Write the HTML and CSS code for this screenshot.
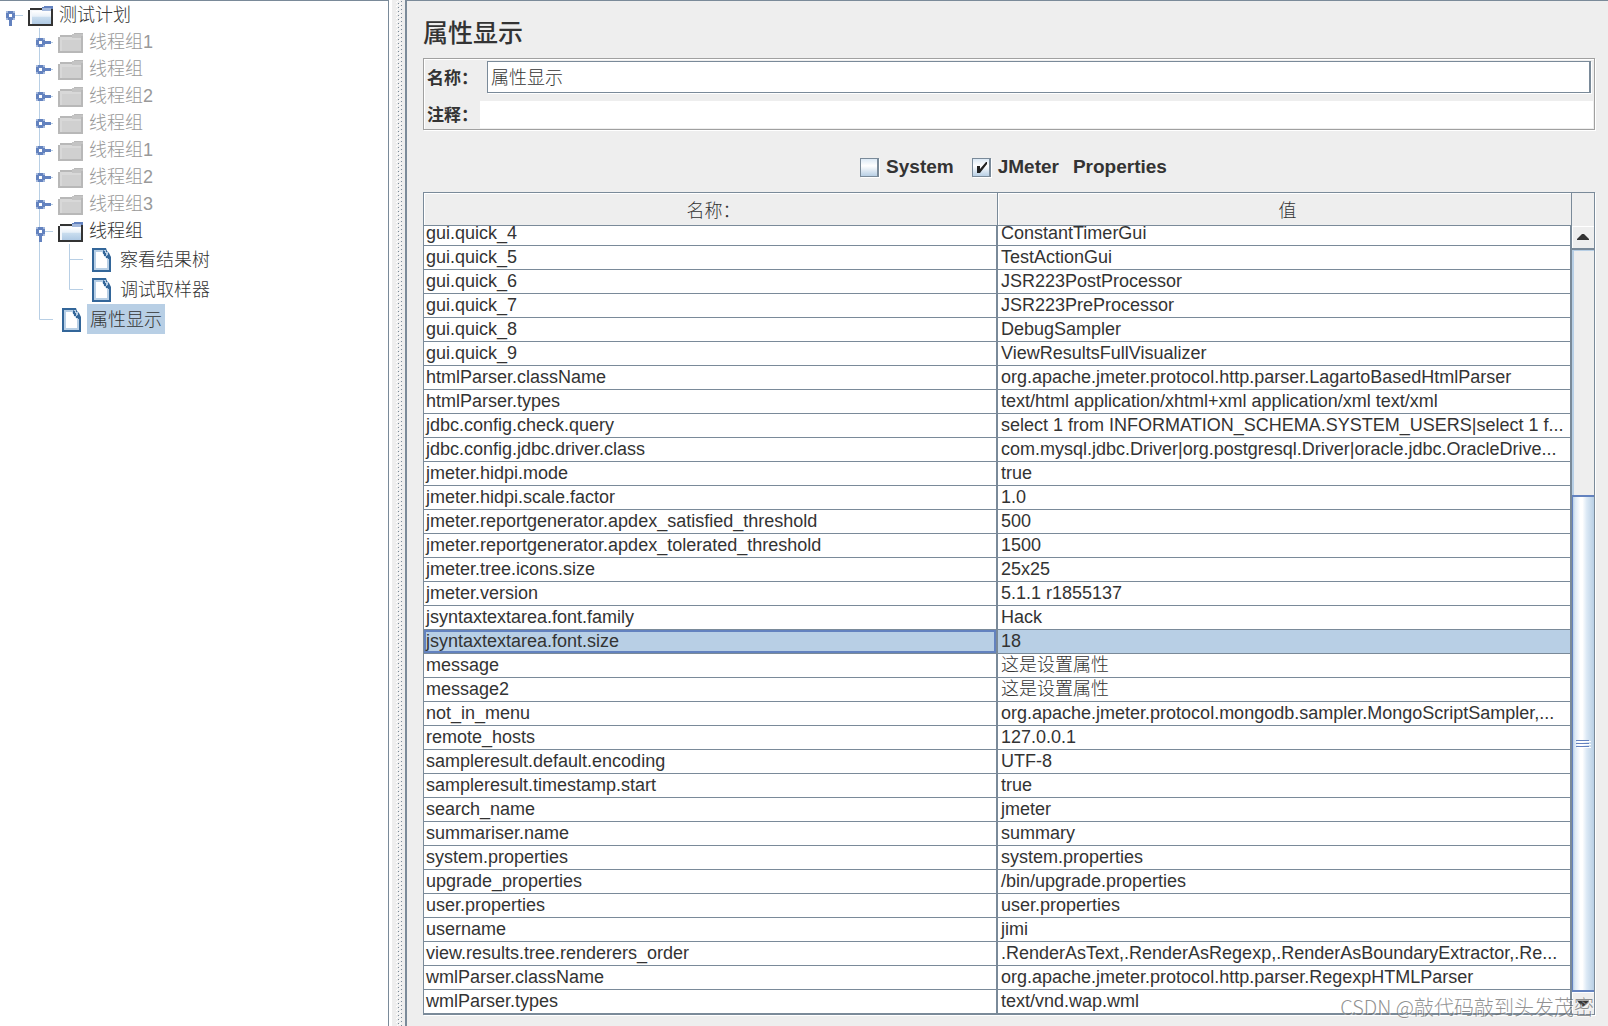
FILE: index.html
```html
<!DOCTYPE html>
<html lang="zh-CN">
<head>
<meta charset="utf-8">
<title>属性显示</title>
<link rel="stylesheet" href="styles.css">
</head>
<body>
<svg class="defs" aria-hidden="true">
  <defs>
    <linearGradient id="sky" x1="0" y1="0" x2="0" y2="1"><stop offset="0" stop-color="#fff"/><stop offset=".4" stop-color="#e8f0f8"/><stop offset=".5" stop-color="#c8dcee"/><stop offset="1" stop-color="#b0cae4"/></linearGradient>
    <symbol id="folder" viewBox="0 0 25 20">
      <path fill="#333" d="M2 2H14V5H23V2H25V20H0V4H2Z"/>
      <path fill="#f4f7fb" d="M2 4H14V5H23V18H2Z"/>
      <path fill="url(#sky)" d="M4 5H23V18H4Z"/>
      <path fill="#6382bf" d="M16 0H25V3H23V2H14V1H16Z"/>
      <path fill="#a3b8dc" d="M14 2H23V5H14Z"/>
    </symbol>
    <symbol id="folder-off" viewBox="0 0 25 20">
      <path fill="#b8b8b8" d="M2 2H14V1H16V0H25V20H0V4H2Z"/>
      <path fill="#d8d8d8" d="M2 4H14V5H23V18H2Z"/>
      <path fill="#d0d0d0" d="M4 7H23V18H4Z"/>
      <path fill="#c4c4c4" d="M14 1H25V3H23V5H14Z"/>
    </symbol>
    <symbol id="page" viewBox="0 0 19 24">
      <path fill="#336699" d="M0 0H14L15 3L17 5L19 9V24H0Z"/>
      <path fill="#b8cfe5" d="M2 2H11L17 10V22H2Z"/>
      <path fill="#fff" d="M4 4H10L12 8L15 11V20H4Z"/>
      <path fill="#b8cfe5" d="M12 2H14V4H16V7H14V5H12Z"/>
      <path fill="#336699" d="M11 3H13V5H14V8H16V9H17V11H16V10H14V8H12V6H11Z"/>
    </symbol>
    <symbol id="knob" viewBox="0 0 16 9">
      <path fill="#a3b8dc" d="M0 0H9V9H0Z"/>
      <path fill="#6382bf" d="M2 0H7V2H9V3H15V6H9V7H7V9H2V7H0V2H2Z"/>
      <path fill="#fff" d="M3 3H6V6H3Z"/>
    </symbol>
    <symbol id="closed" viewBox="0 0 54 27">
      <path stroke="#b8cfe5" d="M39.500 0V27M40 14.500H53"/>
      <use href="#knob" x="36" y="10" width="16" height="9"/>
    </symbol>
  </defs>
</svg>
<nav class="tree" aria-label="测试计划">
  <ul>
    <li class="root"><svg class="rail" width="28" height="27"><path stroke="#b8cfe5" d="M14 14.500H23"/><use href="#knob" width="16" height="9" transform="translate(15 10) rotate(90)"/></svg><svg class="icon" width="25" height="20"><use href="#folder"/></svg><span class="name">测试计划</span></li>
    <li class="off"><svg class="rail" width="58" height="27"><use href="#closed" width="54" height="27"/></svg><svg class="icon" width="25" height="20"><use href="#folder-off"/></svg><span class="name">线程组1</span></li>
    <li class="off"><svg class="rail" width="58" height="27"><use href="#closed" width="54" height="27"/></svg><svg class="icon" width="25" height="20"><use href="#folder-off"/></svg><span class="name">线程组</span></li>
    <li class="off"><svg class="rail" width="58" height="27"><use href="#closed" width="54" height="27"/></svg><svg class="icon" width="25" height="20"><use href="#folder-off"/></svg><span class="name">线程组2</span></li>
    <li class="off"><svg class="rail" width="58" height="27"><use href="#closed" width="54" height="27"/></svg><svg class="icon" width="25" height="20"><use href="#folder-off"/></svg><span class="name">线程组</span></li>
    <li class="off"><svg class="rail" width="58" height="27"><use href="#closed" width="54" height="27"/></svg><svg class="icon" width="25" height="20"><use href="#folder-off"/></svg><span class="name">线程组1</span></li>
    <li class="off"><svg class="rail" width="58" height="27"><use href="#closed" width="54" height="27"/></svg><svg class="icon" width="25" height="20"><use href="#folder-off"/></svg><span class="name">线程组2</span></li>
    <li class="off"><svg class="rail" width="58" height="27"><use href="#closed" width="54" height="27"/></svg><svg class="icon" width="25" height="20"><use href="#folder-off"/></svg><span class="name">线程组3</span></li>
    <li><svg class="rail" width="58" height="27"><path stroke="#b8cfe5" d="M39.500 0V27M44 14.500H53"/><use href="#knob" width="16" height="9" transform="translate(45 10) rotate(90)"/></svg><svg class="icon" width="25" height="20"><use href="#folder"/></svg><span class="name">线程组</span></li>
    <li class="leaf"><svg class="rail" width="92" height="30"><path stroke="#b8cfe5" d="M39.500 0V30M69.500 0V30M70 15.500H83"/></svg><svg class="icon" width="19" height="24"><use href="#page"/></svg><span class="name">察看结果树</span></li>
    <li class="leaf"><svg class="rail" width="92" height="30"><path fill="none" stroke="#b8cfe5" d="M39.500 0V30M69.500 0V15.500H83"/></svg><svg class="icon" width="19" height="24"><use href="#page"/></svg><span class="name">调试取样器</span></li>
    <li class="leaf selected"><svg class="rail" width="62" height="30"><path fill="none" stroke="#b8cfe5" d="M39.500 0V15.500H53"/></svg><svg class="icon" width="19" height="24"><use href="#page"/></svg><span class="name">属性显示</span></li>
  </ul>
</nav>
<div class="divider" aria-hidden="true">
  <svg width="8" height="100%">
    <defs><pattern id="bumps" width="8" height="4" patternUnits="userSpaceOnUse"><path fill="#fff" d="M0 2H1V3H0ZM3 0H4V1H3ZM1 1H2V2H1ZM4 3H5V4H4Z"/><path fill="#7a8a99" d="M2 3H3V4H2ZM5 1H6V2H5Z"/></pattern></defs>
    <rect width="8" height="100%" fill="url(#bumps)"/>
  </svg>
</div>
<main>
  <h1>属性显示</h1>
  <form class="fields">
    <div class="field"><label for="name">名称：</label><input id="name" class="boxed" type="text" value="属性显示"></div>
    <div class="field note"><label for="note">注释：</label><input id="note" type="text"></div>
  </form>
  <div class="switches">
    <label><span class="tick"><input type="checkbox"></span>System</label>
    <label><span class="tick"><input type="checkbox" checked><svg width="19" height="19" viewBox="0 0 19 19"><path fill="#222" d="M5 8H8V11L14 4H15V6L8 15H5Z"/></svg></span>JMeter</label>
    <span class="caption">Properties</span>
  </div>
  <section class="grid">
    <table>
      <thead><tr><th>名称：</th><th>值</th></tr></thead>
      <tbody>
        <tr class="partial"><td>gui.quick_4</td><td>ConstantTimerGui</td></tr>
        <tr><td>gui.quick_5</td><td>TestActionGui</td></tr>
        <tr><td>gui.quick_6</td><td>JSR223PostProcessor</td></tr>
        <tr><td>gui.quick_7</td><td>JSR223PreProcessor</td></tr>
        <tr><td>gui.quick_8</td><td>DebugSampler</td></tr>
        <tr><td>gui.quick_9</td><td>ViewResultsFullVisualizer</td></tr>
        <tr><td>htmlParser.className</td><td>org.apache.jmeter.protocol.http.parser.LagartoBasedHtmlParser</td></tr>
        <tr><td>htmlParser.types</td><td>text/html application/xhtml+xml application/xml text/xml</td></tr>
        <tr><td>jdbc.config.check.query</td><td>select 1 from INFORMATION_SCHEMA.SYSTEM_USERS|select 1 f...</td></tr>
        <tr><td>jdbc.config.jdbc.driver.class</td><td>com.mysql.jdbc.Driver|org.postgresql.Driver|oracle.jdbc.OracleDrive...</td></tr>
        <tr><td>jmeter.hidpi.mode</td><td>true</td></tr>
        <tr><td>jmeter.hidpi.scale.factor</td><td>1.0</td></tr>
        <tr><td>jmeter.reportgenerator.apdex_satisfied_threshold</td><td>500</td></tr>
        <tr><td>jmeter.reportgenerator.apdex_tolerated_threshold</td><td>1500</td></tr>
        <tr><td>jmeter.tree.icons.size</td><td>25x25</td></tr>
        <tr><td>jmeter.version</td><td>5.1.1 r1855137</td></tr>
        <tr><td>jsyntaxtextarea.font.family</td><td>Hack</td></tr>
        <tr class="picked"><td>jsyntaxtextarea.font.size</td><td>18</td></tr>
        <tr><td>message</td><td>这是设置属性</td></tr>
        <tr><td>message2</td><td>这是设置属性</td></tr>
        <tr><td>not_in_menu</td><td>org.apache.jmeter.protocol.mongodb.sampler.MongoScriptSampler,...</td></tr>
        <tr><td>remote_hosts</td><td>127.0.0.1</td></tr>
        <tr><td>sampleresult.default.encoding</td><td>UTF-8</td></tr>
        <tr><td>sampleresult.timestamp.start</td><td>true</td></tr>
        <tr><td>search_name</td><td>jmeter</td></tr>
        <tr><td>summariser.name</td><td>summary</td></tr>
        <tr><td>system.properties</td><td>system.properties</td></tr>
        <tr><td>upgrade_properties</td><td>/bin/upgrade.properties</td></tr>
        <tr><td>user.properties</td><td>user.properties</td></tr>
        <tr><td>username</td><td>jimi</td></tr>
        <tr><td>view.results.tree.renderers_order</td><td>.RenderAsText,.RenderAsRegexp,.RenderAsBoundaryExtractor,.Re...</td></tr>
        <tr><td>wmlParser.className</td><td>org.apache.jmeter.protocol.http.parser.RegexpHTMLParser</td></tr>
        <tr><td>wmlParser.types</td><td>text/vnd.wap.wml</td></tr>
      </tbody>
    </table>
    <div class="scroll">
      <button type="button" class="up" aria-label="向上滚动"><svg width="12" height="6"><path fill="#333" d="M5 0H7L12 5V6H0V5Z"/></svg></button>
      <div class="track"></div>
      <div class="thumb"><svg width="15" height="9"><path stroke="#fff" d="M1 2.500H15M1 5.500H15M1 8.500H15"/><path stroke="#6382bf" d="M0 1.500H13M0 4.500H13M0 7.500H13"/></svg></div>
      <button type="button" class="down" aria-label="向下滚动"><svg width="12" height="6"><path fill="#333" d="M0 0H12V1L7 6H5L0 1Z"/></svg></button>
    </div>
  </section>
  <div class="watermark">CSDN @敲代码敲到头发茂密</div>
</main>
</body>
</html>
```
FILE: styles.css
```css
* { box-sizing: border-box; }
body {
  margin: 0;
  min-height: 100vh;
  display: flex;
  background: #eee;
  color: #333;
  font: 18px/24px "Liberation Sans", "Noto Sans CJK SC", sans-serif;
}
.defs { position: absolute; width: 0; height: 0; }
svg { display: block; flex: none; }

.tree {
  flex: 0 0 389px;
  background: #fff;
  border-top: 1px solid #7a8a99;
  border-right: 1px solid #7a8a99;
}
.tree ul { list-style: none; margin: 0; padding: 0; font-weight: 300; }
.tree li { display: flex; align-items: center; height: 27px; }
.tree .leaf { height: 30px; }
.tree .icon { margin-top: 3px; }
.tree .leaf .icon { margin-top: 2px; }
.name { padding: 2px 3px 0; margin-left: 3px; line-height: 25px; }
.leaf .name { margin-left: 6px; line-height: 28px; }
.off .name { color: #999; }
.selected .name { background: #b8cfe5; }

.divider {
  flex: 0 0 16px;
  border-left: 3px solid #fff;
  position: relative;
}
.divider svg { position: absolute; top: 0; left: 4px; }

main {
  flex: 1;
  min-width: 0;
  position: relative;
  display: flex;
  flex-direction: column;
  padding: 16px 12px 10px 16px;
  border-top: 1px solid #7a8a99;
  border-left: 2px solid #7a8a99;
}
h1 { margin: 0 0 9px; font-size: 25px; line-height: 32px; font-weight: 500; }

.fields {
  border: 1px solid #a0a0a0;
  box-shadow: inset 1px 1px #fff, 1px 1px #fff;
  padding: 2px 1px 1px 3px;
  margin-right: 1px;
}
.field { display: flex; align-items: center; }
.field label { flex: 0 0 60px; padding-top: 3px; font-size: 17px; font-weight: 700; white-space: nowrap; }
.field input {
  flex: 1;
  min-width: 0;
  height: 27px;
  border: 0;
  padding: 0 3px;
  background: #fff;
  color: #333;
  font: inherit;
  font-weight: 300;
}
.field .boxed {
  height: 32px;
  padding-bottom: 2px;
  margin: 0 2px 0 0;
  border: 1px solid #7a8a99;
  border-right-width: 2px;
  box-shadow: 1px 1px #fff;
}
.note { margin-top: 8px; }
.note label { flex-basis: 53px; }

.switches {
  display: flex;
  justify-content: center;
  align-items: center;
  padding: 25px 0 13px 8px;
  font-size: 19px;
  font-weight: 700;
}
.switches label { display: flex; align-items: center; gap: 7px; margin-right: 18px; }
.switches label + label { margin-right: 14px; }
.tick { display: grid; }
.tick > * { grid-area: 1 / 1; }
.tick svg { pointer-events: none; }
.tick input {
  appearance: none;
  width: 19px;
  height: 19px;
  margin: 0;
  border: 1px solid #7a8a99;
  border-right-width: 2px;
  background: linear-gradient(#dce9f5, #fff 40%, #b8cfe5);
  box-shadow: 1px 1px #fff;
}

.grid {
  display: flex;
  border: 1px solid #7a8a99;
  box-shadow: 1px 1px #fff;
  margin-right: 1px;
}
table { flex: 1; width: 100%; min-width: 0; table-layout: fixed; border-collapse: separate; border-spacing: 0; }
th {
  width: 50%;
  height: 33px;
  padding: 3px 0 0 6px;
  background: #eee;
  border-right: 1px solid #7a8a99;
  border-bottom: 1px solid #7a8a99;
  box-shadow: inset 1px 1px #fff;
  font-weight: 300;
}
td {
  height: 24px;
  padding: 0 0 0 2px;
  background: #fff;
  border-right: 2px solid #7a8a99;
  border-bottom: 1px solid #7a8a99;
  line-height: 23px;
  white-space: nowrap;
  overflow: hidden;
  text-overflow: ellipsis;
  font-weight: 300;
}
td + td { padding-left: 3px; }
.partial td { height: 20px; padding-bottom: 4px; line-height: 15px; }
.picked td { background: #b8cfe5; }
.picked td:first-child { box-shadow: inset 0 0 0 2px #6382bf; }

.scroll { flex: 0 0 22px; display: flex; flex-direction: column; padding-top: 33px; }
.scroll button {
  display: flex;
  justify-content: center;
  align-items: center;
  height: 24px;
  padding: 0;
  border: 0;
  background: #eee;
  box-shadow: inset 1px 1px #fff;
}
.scroll .up { border-bottom: 2px solid #7a8a99; }
.scroll .down { height: 22px; }
.track { flex: 245; border-left: 2px solid #b8cfe5; border-top: 1px solid #b8cfe5; }
.thumb {
  flex: 496;
  display: flex;
  justify-content: center;
  align-items: center;
  border: 1px solid #6382bf;
  border-width: 2px 0 2px 1px;
  background: linear-gradient(90deg, #b8cfe5 0, #dce9f5 10%, #fff 35%, #fff 45%, #dce9f5 65%, #b8cfe5);
}
.watermark {
  position: absolute;
  right: 14px;
  bottom: 7px;
  color: rgba(110, 110, 110, .75);
  font-family: "Noto Sans CJK SC", sans-serif;
  font-size: 20px;
  font-weight: 300;
  text-shadow: 1px 1px rgba(255, 255, 255, .6);
}
```
